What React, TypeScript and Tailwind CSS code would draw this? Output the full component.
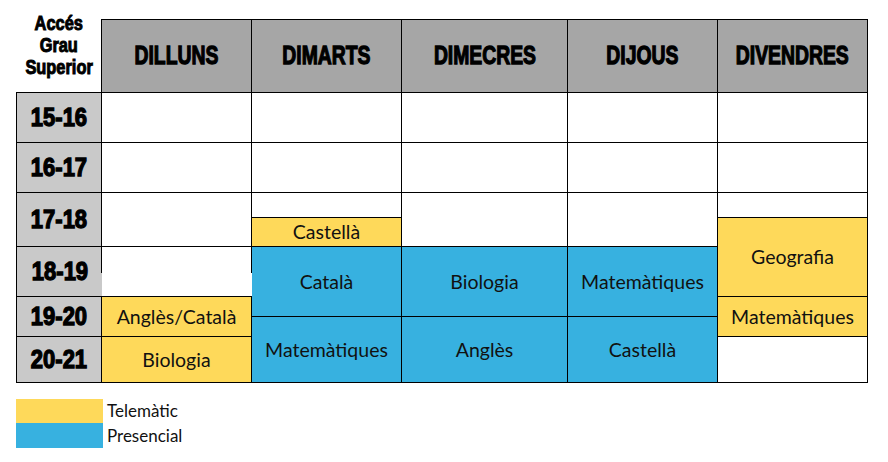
const head = "font-['Liberation_Sans','Arial',sans-serif] font-bold text-black [-webkit-text-stroke:1.3px_black]"
const body = "font-['Lato','Open_Sans',sans-serif] text-[19.5px] text-[#111]"

const days = ['DILLUNS', 'DIMARTS', 'DIMECRES', 'DIJOUS', 'DIVENDRES']
const times = ['15-16', '16-17', '17-18', '18-19', '19-20', '20-21']

// row tracks: top pad, header, 15-16, 16-17, 17-18a, 17-18b, 18-19, 19-20a, 19-20b, 20-21
const timeRows = [
    'row-start-3 row-end-4',
    'row-start-4 row-end-5',
    'row-start-5 row-end-7',
    'row-start-7 row-end-8',
    'row-start-8 row-end-10',
    'row-start-10 row-end-11',
]

function Cell({ pos, color, children }: { pos: string; color?: string; children?: React.ReactNode }) {
    return (
        <div className={`${pos} ${color ?? 'bg-white'} border-r border-b border-black flex items-center justify-center ${body}`}>
            {children}
        </div>
    )
}

export default function App() {
    const yellow = 'bg-[#fed95a]'
    const blue = 'bg-[#37b1e0]'

    return (
        <div className="w-[888px] h-[462px] bg-white">
            <div className="ml-[16px] grid grid-cols-[86px_150px_150px_166px_150px_150px] grid-rows-[19px_74px_50px_50px_25px_29px_50px_20px_20px_46px]">
                {/* corner */}
                <div className="col-start-1 row-start-1 row-end-3 border-b border-black flex flex-col items-center justify-center pb-[2px] text-[19.5px] leading-[22px] font-['Liberation_Sans','Arial',sans-serif] font-bold text-black [-webkit-text-stroke:1px_black]">
                    <span className="inline-block scale-x-[0.84]">Accés</span>
                    <span className="inline-block scale-x-[0.84]">Grau</span>
                    <span className="inline-block scale-x-[0.84]">Superior</span>
                </div>

                {/* day headers */}
                {days.map((d, i) => (
                    <div
                        key={d}
                        className={`row-start-2 bg-[#a6a6a6] border-t border-r border-b border-black flex items-center justify-center text-[26.5px] ${head} ${i === 0 ? 'border-l -ml-px' : ''}`}
                    >
                        <span className="inline-block scale-x-[0.73] whitespace-nowrap">{d}</span>
                    </div>
                ))}

                {/* time column */}
                {times.map((t, i) => (
                    <div
                        key={t}
                        className={`col-start-1 ${timeRows[i]} bg-[#c9c9c9] border-l border-b border-black ${i === 3 ? '' : 'border-r'} flex items-center justify-center text-[25px] ${head}`}
                    >
                        <span className="inline-block scale-x-[0.88]">{t}</span>
                    </div>
                ))}

                {/* DILLUNS */}
                <Cell pos="col-start-2 row-start-3 row-end-4" />
                <Cell pos="col-start-2 row-start-4 row-end-5" />
                <Cell pos="col-start-2 row-start-5 row-end-7" />
                <div className="col-start-2 row-start-7 row-end-8 border-b border-black bg-white">
                    <div className="-ml-px h-[26px] border-l border-r border-black" />
                </div>
                <Cell pos="col-start-2 row-start-8 row-end-10" color={yellow}>Anglès/Català</Cell>
                <Cell pos="col-start-2 row-start-10 row-end-11" color={yellow}>Biologia</Cell>

                {/* DIMARTS */}
                <Cell pos="col-start-3 row-start-3 row-end-4" />
                <Cell pos="col-start-3 row-start-4 row-end-5" />
                <Cell pos="col-start-3 row-start-5 row-end-6" />
                <Cell pos="col-start-3 row-start-6 row-end-7" color={yellow}>Castellà</Cell>
                <Cell pos="col-start-3 row-start-7 row-end-9" color={blue}>Català</Cell>
                <Cell pos="col-start-3 row-start-9 row-end-11" color={blue}>Matemàtiques</Cell>

                {/* DIMECRES */}
                <Cell pos="col-start-4 row-start-3 row-end-4" />
                <Cell pos="col-start-4 row-start-4 row-end-5" />
                <Cell pos="col-start-4 row-start-5 row-end-7" />
                <Cell pos="col-start-4 row-start-7 row-end-9" color={blue}>Biologia</Cell>
                <Cell pos="col-start-4 row-start-9 row-end-11" color={blue}>Anglès</Cell>

                {/* DIJOUS */}
                <Cell pos="col-start-5 row-start-3 row-end-4" />
                <Cell pos="col-start-5 row-start-4 row-end-5" />
                <Cell pos="col-start-5 row-start-5 row-end-7" />
                <Cell pos="col-start-5 row-start-7 row-end-9" color={blue}>Matemàtiques</Cell>
                <Cell pos="col-start-5 row-start-9 row-end-11" color={blue}>Castellà</Cell>

                {/* DIVENDRES */}
                <Cell pos="col-start-6 row-start-3 row-end-4" />
                <Cell pos="col-start-6 row-start-4 row-end-5" />
                <Cell pos="col-start-6 row-start-5 row-end-6" />
                <Cell pos="col-start-6 row-start-6 row-end-8" color={yellow}>Geografia</Cell>
                <Cell pos="col-start-6 row-start-8 row-end-10" color={yellow}>Matemàtiques</Cell>
                <Cell pos="col-start-6 row-start-10 row-end-11" />
            </div>

            {/* legend */}
            <div className="ml-[16px] mt-[16px] flex flex-col">
                <div className="flex items-center h-[24px]">
                    <div className={`w-[87px] h-full ${yellow}`} />
                    <span className="ml-[4px] font-['Lato','Open_Sans',sans-serif] text-[17px] text-[#111]">Telemàtic</span>
                </div>
                <div className="flex items-center h-[25px]">
                    <div className={`w-[87px] h-full ${blue}`} />
                    <span className="ml-[4px] font-['Lato','Open_Sans',sans-serif] text-[17px] text-[#111]">Presencial</span>
                </div>
            </div>
        </div>
    )
}
